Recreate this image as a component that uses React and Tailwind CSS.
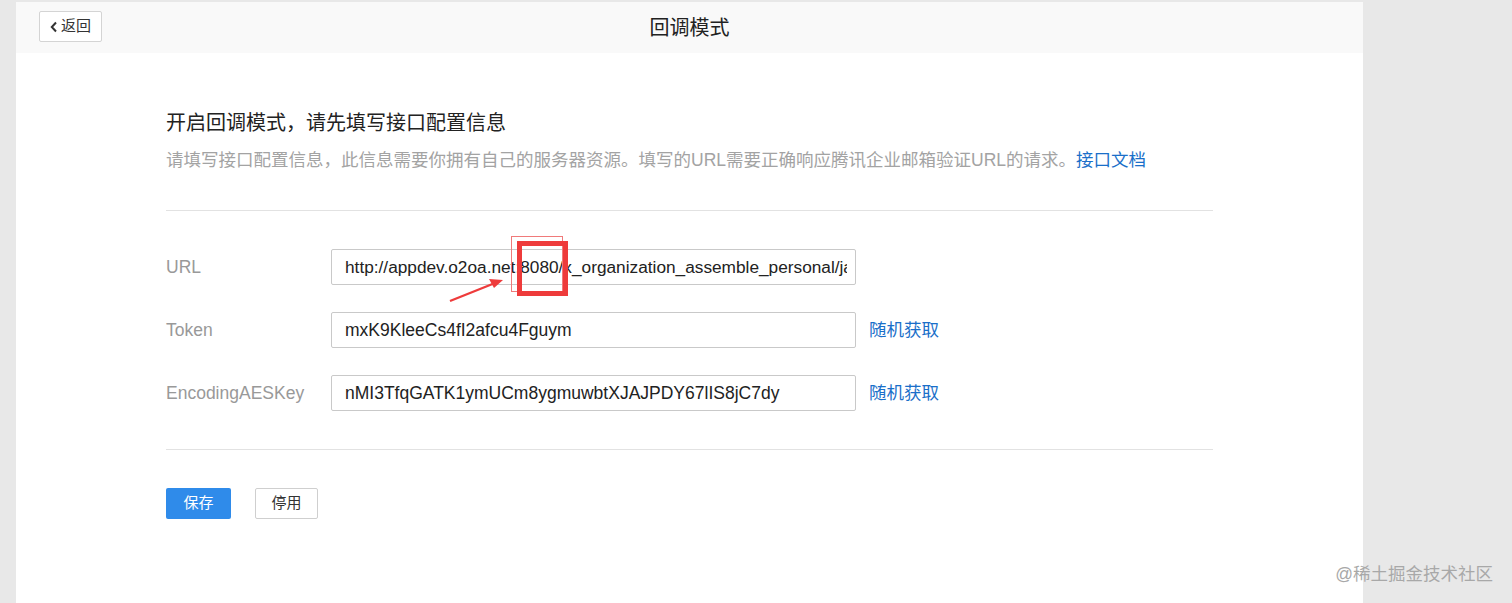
import React from 'react';

const font = { fontFamily: '"Liberation Sans", "Noto Sans CJK SC", sans-serif' };

function Row({ label, value, link, url, children }) {
  return (
    <div className="flex items-center h-[36px]">
      <div className="w-[165px] text-[17.5px] text-[#999]">{label}</div>
      <div className="relative">
        <input
          readOnly
          value={value}
          className={`w-[525px] h-[36px] border border-[#c9c9c9] rounded-[2px] pl-[13px] pr-2 text-[#222] bg-white outline-none ${url ? 'text-[17.25px]' : 'text-[17.5px]'}`}
          style={font}
        />
        {children}
      </div>
      {link && <a className="ml-[13px] text-[17.5px] text-[#1a6fc9] cursor-pointer">{link}</a>}
    </div>
  );
}

export default function App() {
  return (
    <div className="relative h-[603px] overflow-hidden bg-[#e8e8e8]" style={font}>
      <div className="ml-[16px] mt-[2px] w-[1347px] h-[601px] bg-white">
        <div className="relative h-[51px] bg-[#f9f9f9] flex items-center justify-center">
          <button className="absolute left-[23px] top-[9px] h-[31px] w-[63px] flex items-center justify-center gap-[3px] border border-[#d4d4d4] rounded-[2px] bg-white text-[15px] text-[#333]">
            <svg width="8" height="12" viewBox="0 0 8 12"><path d="M6 1.5 1.8 6 6 10.5" fill="none" stroke="#333" strokeWidth="2" /></svg>
            返回
          </button>
          <div className="text-[20px] text-[#222]">回调模式</div>
        </div>

        <div className="pl-[150px] pt-[56px]">
          <div className="text-[20px] leading-[28px] text-[#222]">开启回调模式，请先填写接口配置信息</div>
          <div className="mt-[11px] text-[17.5px] leading-[24px] text-[#a3a3a3]">
            请填写接口配置信息，此信息需要你拥有自己的服务器资源。填写的URL需要正确响应腾讯企业邮箱验证URL的请求。
            <a className="text-[#1a6fc9] cursor-pointer">接口文档</a>
          </div>
          <div className="mt-[38px] w-[1047px] h-px bg-[#e2e2e2]" />

          <div className="mt-[38px] flex flex-col gap-[27px]">
            <Row label="URL" url value="http://appdev.o2oa.net:8080/x_organization_assemble_personal/jaxrs/exmail/check">
              <div className="absolute left-[180px] top-[-13px] w-[52px] h-[56px] border border-[#f07a7a] pointer-events-none" />
              <div className="absolute left-[186px] top-[-8px] w-[51px] h-[55px] border-[5px] border-[#ee3b3b] pointer-events-none" />
              <svg className="absolute left-[116px] top-[20px] pointer-events-none" width="60" height="36" viewBox="0 0 60 36">
                <path d="M3 32 L48 14" stroke="#ee3b3b" strokeWidth="2.2" fill="none" />
                <path d="M56 11 L42 10 L47 19 Z" fill="#ee3b3b" />
              </svg>
            </Row>
            <Row label="Token" value="mxK9KleeCs4fI2afcu4Fguym" link="随机获取" />
            <Row label="EncodingAESKey" value="nMI3TfqGATK1ymUCm8ygmuwbtXJAJPDY67lIS8jC7dy" link="随机获取" />
          </div>

          <div className="mt-[38px] w-[1047px] h-px bg-[#e2e2e2]" />

          <div className="mt-[38px] flex gap-[24px]">
            <button className="h-[31px] w-[65px] rounded-[2px] bg-[#2f8bea] text-white text-[15px]">保存</button>
            <button className="h-[31px] w-[63px] rounded-[2px] border border-[#cfcfcf] bg-white text-[#333] text-[15px]">停用</button>
          </div>
        </div>
      </div>
      <div className="absolute right-[19px] bottom-[16px] text-[17.5px] text-[#a8a8a8]">@稀土掘金技术社区</div>
    </div>
  );
}
